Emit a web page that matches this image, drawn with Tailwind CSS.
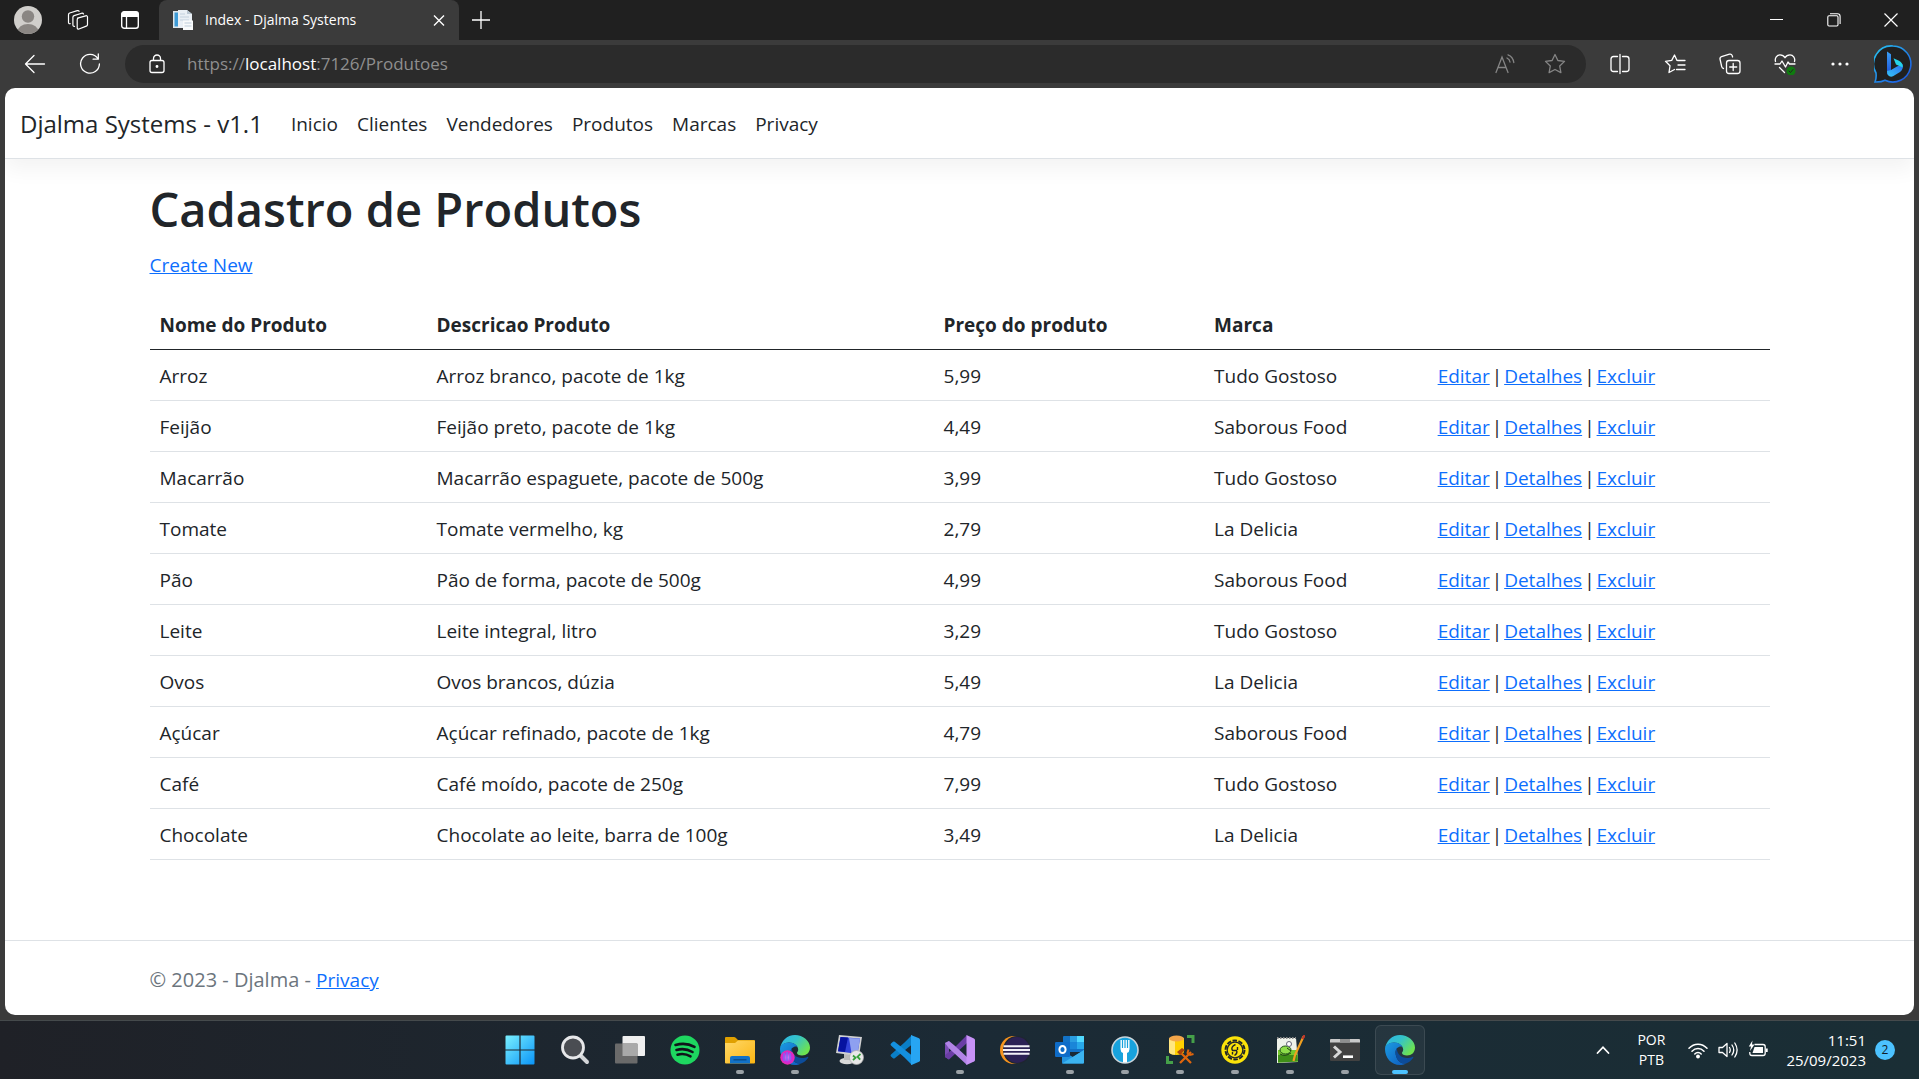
<!DOCTYPE html>
<html lang="pt-BR">
<head>
<meta charset="utf-8">
<meta name="viewport" content="width=device-width, initial-scale=1">
<title>Index - Djalma Systems</title>
<script src="https://cdn.jsdelivr.net/npm/@tailwindcss/browser@4"></script>
</head>
<body class="flex min-h-screen flex-col bg-[#3b3b3b] font-['Segoe_UI','Open_Sans',sans-serif] text-[#212529]">

<!-- Title bar -->
<div class="flex h-10 items-stretch bg-[#202020] text-white">
  <div class="flex w-[159px] items-center gap-[30px] rounded-br-md pl-[14px]">
    <button aria-label="Perfil" class="size-7"><svg viewBox="0 0 28 28" class="size-7"><defs><clipPath id="av"><circle cx="14" cy="14" r="14"/></clipPath></defs><g clip-path="url(#av)"><rect width="28" height="28" fill="#d0cecb"/><circle cx="14" cy="10.5" r="6.2" fill="#8a8683"/><ellipse cx="14" cy="26" rx="10.5" ry="8" fill="#8a8683"/></g></svg></button>
    <button aria-label="Workspaces" class="-ml-[5px] size-[22px]"><svg viewBox="0 0 22 22" class="size-[22px]" fill="none" stroke="#fff" stroke-width="1.2" stroke-linejoin="round" stroke-linecap="round"><path d="M10.5 9.2l8.2-2.4c1-.3 1.8.2 1.8 1.2v7.4c0 .8-.4 1.4-1.2 1.7L12 20c-1 .3-1.8-.2-1.8-1.2v-8c0-.8.2-1.4 1-1.700z"/><path d="M7.500 17.300c-1 .2-1.600-.3-1.600-1.200V8.300c0-.9.4-1.400 1.200-1.700l7.600-2.400c.9-.2 1.500 0 1.800.7"/><path d="M3.200 14.700c-1 .2-1.700-.3-1.700-1.200V5.700c0-.9.400-1.400 1.200-1.700l7.600-2.400c.9-.2 1.500 0 1.800.7"/></svg></button>
    <button aria-label="Guias verticais" class="-mr-1 ml-[1px] size-5"><svg viewBox="0 0 20 20" class="size-5"><rect x="1.700" y="1.700" width="16.600" height="16.600" rx="2.500" fill="none" stroke="#fff" stroke-width="1.400"/><path d="M1.500 7V4Q1.500 1.500 4 1.500h12q2.500 0 2.500 2.500v3z" fill="#fff"/><path d="M6.500 7v11" stroke="#fff" stroke-width="1.300"/></svg></button>
  </div>
  <div class="flex w-[300px] items-center rounded-t-lg bg-[#3b3b3b] pl-[13px] pr-[10px]">
    <svg viewBox="0 0 22 22" class="size-[22px]"><path d="M1 2h5v17H1z" fill="#dfe6ea"/><path d="M2.500 3.500h3.500v14H2.500z" fill="#3e9bd6"/><path d="M6 1h9l5 4v14H6z" fill="#e9eff5"/><path d="M15 1v4h5z" fill="#b9c6d2"/><path d="M8 5h5M8 8h9M8 11h9" stroke="#c3d1de"/><path d="M11 11.500h10v9.500H11z" fill="#f8fafb"/><path d="M12.500 14h7M12.500 17h7" stroke="#bccbd9"/></svg>
    <span class="ml-[11px] flex-1 text-sm">Index - Djalma Systems</span>
    <button aria-label="Fechar guia" class="size-5"><svg viewBox="0 0 20 20" class="size-5" stroke="#fff" stroke-width="1.400"><path d="M5 5.500l10 10M15 5.500l-10 10"/></svg></button>
  </div>
  <button aria-label="Nova guia" class="flex w-11 items-center justify-center"><svg viewBox="0 0 18 18" class="size-[18px]" stroke="#fff" stroke-width="1.300"><path d="M9 0v18M0 9h18"/></svg></button>
  <div class="ml-auto flex">
    <button aria-label="Minimizar" class="flex w-[58px] items-center justify-center"><svg viewBox="0 0 14 14" class="size-[14px]"><path d="M1 6.500h13" stroke="#fff"/></svg></button>
    <button aria-label="Restaurar" class="flex w-[57px] items-center justify-center"><svg viewBox="0 0 14 14" class="size-[14px]" fill="none" stroke="#fff" stroke-width="1.100"><rect x=".8" y="2.800" width="10.200" height="10.200" rx="1.200"/><path d="M3 .8h7.500q2.600 0 2.600 2.600V11"/></svg></button>
    <button aria-label="Fechar" class="flex w-[57px] items-center justify-center"><svg viewBox="0 0 14 14" class="size-[14px]" stroke="#fff" stroke-width="1.200"><path d="M.5.500l13 13M13.500.500l-13 13"/></svg></button>
  </div>
</div>

<!-- Address bar -->
<div class="flex h-12 items-center gap-[33px] pl-6 pr-[7px]">
  <button aria-label="Voltar" class="size-[22px]"><svg viewBox="0 0 22 22" class="size-[22px]" fill="none" stroke="#fff" stroke-width="1.300" stroke-linecap="round" stroke-linejoin="round"><path d="M20.500 11H1.500M10 2.500L1.500 11l8.500 8.500"/></svg></button>
  <button aria-label="Atualizar" class="size-[22px]"><svg viewBox="0 0 22 22" class="size-[22px]" fill="none" stroke="#fff" stroke-width="1.300" stroke-linecap="round" stroke-linejoin="round"><path d="M18.800 5.500A9.400 9.400 0 1 0 20.400 11M19.300 1v5.200h-5.200"/></svg></button>
  <div class="-ml-[9px] mr-[-10px] flex h-[38px] flex-1 items-center rounded-full bg-[#2b2b2b] pl-[22px] pr-5">
    <button aria-label="Informações do site" class="size-5"><svg viewBox="0 0 20 20" class="size-5" fill="none" stroke="#fff" stroke-width="1.300"><rect x="3" y="6.500" width="14" height="12" rx="2"/><path d="M6.500 6.500V4.500a3.500 3.500 0 0 1 7 0v2"/><circle cx="10" cy="12.500" r=".8" fill="#fff"/></svg></button>
    <div role="textbox" aria-label="Endereço" contenteditable="true" class="ml-5 flex-1 text-[17px] leading-6 text-[#8f8f8f]">https://<span class="text-white">localhost</span>:7126/Produtoes</div>
    <button aria-label="Ler em voz alta" class="mr-7 size-[22px]"><svg viewBox="0 0 22 22" class="size-[22px]" fill="none" stroke="#858585" stroke-width="1.300" stroke-linecap="round"><path d="M2 19.500L8 4l6 15.500M4 14.500h8M13 5c1.800.8 2.800 2.200 3 4M14 1.800c3.300 1.200 5.300 4 5.800 7.700"/></svg></button>
    <button aria-label="Favoritar" class="size-[22px]"><svg viewBox="0 0 22 22" class="size-[22px]" fill="none" stroke="#858585" stroke-width="1.300" stroke-linejoin="round"><path d="M11 1.500l2.900 6 6.600.9-4.800 4.600 1.200 6.600L11 16.500l-5.900 3.100 1.200-6.600L1.500 8.400l6.600-.9z"/></svg></button>
  </div>
  <button aria-label="Dividir tela" class="size-[22px]"><svg viewBox="0 0 22 22" class="size-[22px]" fill="none" stroke="#fff" stroke-width="1.300" stroke-linecap="round"><path d="M8.500 3.500h-4Q2 3.500 2 6v10q0 2.500 2.500 2.500h4M13.500 3.500h4Q20 3.500 20 6v10q0 2.500-2.500 2.500h-4M11 1.500v19"/></svg></button>
  <button aria-label="Favoritos" class="size-[22px]"><svg viewBox="0 0 22 22" class="size-[22px]" fill="none" stroke="#fff" stroke-width="1.300" stroke-linecap="round" stroke-linejoin="round"><path d="M14 7.500l-1-.1L10.500 2 7.700 7.400l-6.200.9L6 12.800l-1 6.700 5.500-3M14 7.500h7M14 12h7M12.500 16.500H21"/></svg></button>
  <button aria-label="Coleções" class="size-[22px]"><svg viewBox="0 0 22 22" class="size-[22px]" fill="none" stroke="#fff" stroke-width="1.300" stroke-linecap="round" stroke-linejoin="round"><rect x="7.500" y="7.500" width="13.500" height="13" rx="2.500"/><path d="M14.200 10.500v7M10.700 14h7M4.500 15.500c-1.200-.2-1.600-.8-1.800-1.800L1 6c-.2-1.200.3-2 1.500-2.400L10.500 1.200c1.300-.3 2.200.1 2.600 1.200l.5 1.600"/></svg></button>
  <button aria-label="Desempenho" class="size-[22px]"><svg viewBox="0 0 22 22" class="size-[22px]" fill="none" stroke="#fff" stroke-width="1.300" stroke-linecap="round" stroke-linejoin="round"><path d="M1.500 8.500C.5 5 3 1.800 6 1.800c2.300 0 4 1.200 5 3 1-1.800 2.700-3 5-3 3 0 5.500 3.200 4.500 6.700M1 11h5l2-3 3.500 6 2.500-5 1.500 2H21M5.500 14.500l5 5"/><circle cx="17" cy="18" r="4.500" fill="#0f7b0f" stroke="none"/><path d="M15 18l1.500 1.500 2.500-3" stroke="#222" stroke-width="1"/></svg></button>
  <button aria-label="Mais" class="size-[22px]"><svg viewBox="0 0 22 22" class="size-[22px]" fill="#fff"><circle cx="4" cy="11" r="1.600"/><circle cx="11" cy="11" r="1.600"/><circle cx="18" cy="11" r="1.600"/></svg></button>
  <button aria-label="Bing" class="-ml-[10px] size-[38px]"><svg viewBox="0 0 38 38" class="size-[38px]"><defs><linearGradient id="bg1" x1="0" y1="0" x2="1" y2="1"><stop offset="0" stop-color="#27c5f0"/><stop offset="1" stop-color="#1b4fe0"/></linearGradient><linearGradient id="bg2" x1="0" y1="0" x2="0" y2="1"><stop offset="0" stop-color="#3aa0f5"/><stop offset="1" stop-color="#1c4fd8"/></linearGradient><linearGradient id="bg3" x1="0" y1="1" x2="1" y2="0"><stop offset="0" stop-color="#36c5f5"/><stop offset="1" stop-color="#2a6cf0"/></linearGradient></defs><path d="M19 1a18 18 0 1 1-8 34.200c-3 1.700-6 1.900-10 1.800 1.200-3 1.500-5 1-9A18 18 0 0 1 19 1z" fill="#202020" stroke="url(#bg1)" stroke-width="1.600"/><path d="M13 6.500l4 2.800v16L13 30z" fill="url(#bg2)"/><path d="M13 26l4-1 6-3.500 5.500-2.500c1 3.500 0 6-2.500 8l-7 4.300c-3.500 1.200-6-.8-6-5.300z" fill="url(#bg3)"/><path d="M19.500 13.200l5.500 2.600c2.700 1.400 4 3.500 3.800 6.800L22 19.500z" fill="#25d3e8"/></svg></button>
</div>

<!-- Web page -->
<div class="mx-[5px] mb-[5px] flex flex-1 flex-col overflow-hidden rounded-[10px] bg-white text-[19px] leading-[30px]">
  <header class="border-b border-[#dee2e6] shadow-[0_10px_20px_rgba(0,0,0,0.05)]">
    <nav class="flex h-[70px] items-center pt-[2px] pl-[15px]">
      <a href="#" class="mr-7 text-2xl">Djalma Systems - v1.1</a>
      <ul class="flex gap-[19px]">
        <li><a href="#">Inicio</a></li>
        <li><a href="#">Clientes</a></li>
        <li><a href="#">Vendedores</a></li>
        <li><a href="#">Produtos</a></li>
        <li><a href="#">Marcas</a></li>
        <li><a href="#">Privacy</a></li>
      </ul>
    </nav>
  </header>

  <main class="mx-auto w-full max-w-[1650px] flex-1 px-[15px] pt-5">
    <h1 class="mb-[11px] text-[47px] leading-[60px] font-semibold">Cadastro de Produtos</h1>
    <p><a href="#" class="text-[#0d6efd] underline">Create New</a></p>
    <table class="mt-[19px] w-full table-fixed border-collapse text-left [&_a]:text-[#0d6efd] [&_a]:underline [&_div]:flex [&_div]:gap-[2px] [&_td]:px-[10px] [&_td]:pt-[11px] [&_td]:pb-[9px] [&_th]:px-[10px] [&_th]:pt-[11px] [&_th]:pb-[9px]">
      <colgroup><col class="w-[17.1%]"><col class="w-[31.3%]"><col class="w-[16.7%]"><col class="w-[13.8%]"><col class="w-[21.1%]"></colgroup>
      <thead class="border-b border-[#212529]">
        <tr><th>Nome do Produto</th><th>Descricao Produto</th><th>Preço do produto</th><th>Marca</th><th></th></tr>
      </thead>
      <tbody class="[&_tr]:border-b [&_tr]:border-[#dee2e6]">
        <tr><td>Arroz</td><td>Arroz branco, pacote de 1kg</td><td>5,99</td><td>Tudo Gostoso</td><td><div><a href="#">Editar</a> | <a href="#">Detalhes</a> | <a href="#">Excluir</a></div></td></tr>
        <tr><td>Feijão</td><td>Feijão preto, pacote de 1kg</td><td>4,49</td><td>Saborous Food</td><td><div><a href="#">Editar</a> | <a href="#">Detalhes</a> | <a href="#">Excluir</a></div></td></tr>
        <tr><td>Macarrão</td><td>Macarrão espaguete, pacote de 500g</td><td>3,99</td><td>Tudo Gostoso</td><td><div><a href="#">Editar</a> | <a href="#">Detalhes</a> | <a href="#">Excluir</a></div></td></tr>
        <tr><td>Tomate</td><td>Tomate vermelho, kg</td><td>2,79</td><td>La Delicia</td><td><div><a href="#">Editar</a> | <a href="#">Detalhes</a> | <a href="#">Excluir</a></div></td></tr>
        <tr><td>Pão</td><td>Pão de forma, pacote de 500g</td><td>4,99</td><td>Saborous Food</td><td><div><a href="#">Editar</a> | <a href="#">Detalhes</a> | <a href="#">Excluir</a></div></td></tr>
        <tr><td>Leite</td><td>Leite integral, litro</td><td>3,29</td><td>Tudo Gostoso</td><td><div><a href="#">Editar</a> | <a href="#">Detalhes</a> | <a href="#">Excluir</a></div></td></tr>
        <tr><td>Ovos</td><td>Ovos brancos, dúzia</td><td>5,49</td><td>La Delicia</td><td><div><a href="#">Editar</a> | <a href="#">Detalhes</a> | <a href="#">Excluir</a></div></td></tr>
        <tr><td>Açúcar</td><td>Açúcar refinado, pacote de 1kg</td><td>4,79</td><td>Saborous Food</td><td><div><a href="#">Editar</a> | <a href="#">Detalhes</a> | <a href="#">Excluir</a></div></td></tr>
        <tr><td>Café</td><td>Café moído, pacote de 250g</td><td>7,99</td><td>Tudo Gostoso</td><td><div><a href="#">Editar</a> | <a href="#">Detalhes</a> | <a href="#">Excluir</a></div></td></tr>
        <tr><td>Chocolate</td><td>Chocolate ao leite, barra de 100g</td><td>3,49</td><td>La Delicia</td><td><div><a href="#">Editar</a> | <a href="#">Detalhes</a> | <a href="#">Excluir</a></div></td></tr>
      </tbody>
    </table>
  </main>

  <footer class="border-t border-[#dee2e6] text-[#6c757d]">
    <div class="mx-auto flex h-[74px] w-full max-w-[1650px] items-center px-[15px] pt-1"><p class="text-xl leading-[30px]">© 2023 - Djalma - <a href="#" class="text-[19px] text-[#0d6efd] underline">Privacy</a></p></div>
  </footer>
</div>

<!-- Taskbar -->
<div class="grid h-[59px] grid-cols-[1fr_auto_1fr] items-center border-t border-[#454a4c] bg-linear-to-r from-[#1f2127] via-[#1b2a35] to-[#1a2e35] text-white">
  <div></div>
  <div class="flex [&>button]:relative [&>button]:flex [&>button]:h-[58px] [&>button]:w-[55px] [&>button]:items-center [&>button]:justify-center [&>button>i]:absolute [&>button>i]:bottom-[5px] [&>button>i]:h-1 [&>button>i]:w-2 [&>button>i]:rounded-full [&>button>i]:bg-[#9aa1a6] [&_svg]:size-[30px]">
    <button aria-label="Iniciar"><svg viewBox="0 0 30 30"><defs><linearGradient id="w" x1="0" y1="0" x2="1" y2="1"><stop offset="0" stop-color="#7af0ff"/><stop offset="1" stop-color="#0a94f7"/></linearGradient></defs><path d="M.5 1.500q0-1 1-1H14.400v13.900H.5zM15.600.500H28.500q1 0 1 1V14.400H15.600zM.5 15.600H14.400V29.500H1.500q-1 0-1-1zM15.600 15.600H29.500V28.500q0 1-1 1H15.600z" fill="url(#w)"/></svg></button>
    <button aria-label="Pesquisar"><svg viewBox="0 0 30 30"><path d="M20 20l7 7" stroke="#d3d5d8" stroke-width="4" stroke-linecap="round"/><circle cx="13" cy="12.500" r="10.500" fill="#4a4d52" stroke="#e7e8ea" stroke-width="2.800"/></svg></button>
    <button aria-label="Visão de tarefas"><svg viewBox="0 0 30 30"><rect x="7.500" y="1" width="22.500" height="20" rx="1" fill="#efefef"/><rect x="0" y="8.500" width="22.500" height="20" rx="1" fill="#6a6a6a"/><path d="M7.500 8.500h15V21h-15z" fill="#a9a9a9"/></svg></button>
    <button aria-label="Spotify"><svg viewBox="0 0 30 30"><circle cx="15" cy="15" r="14.500" fill="#1ed760"/><path d="M5.500 10c6-1.800 13.500-1.200 19 1.900M6.500 15c5.300-1.500 11.200-.8 16 2M7.500 19.700c4.400-1.200 9-.7 13 1.700" fill="none" stroke="#10131a" stroke-width="2.600" stroke-linecap="round"/></svg></button>
    <button aria-label="Explorador"><svg viewBox="0 0 30 30"><defs><linearGradient id="f" x1="0" y1="0" x2="1" y2="1"><stop offset="0" stop-color="#ffd868"/><stop offset="1" stop-color="#fbb512"/></linearGradient></defs><path d="M0 3q0-1 1-1h8q1 0 1.700.7L13 5h16q1 0 1 1v10H0z" fill="#e0a000"/><path d="M0 8h10l3-2.500h16q1 0 1 1V27.500q0 1-1 1H1q-1 0-1-1z" fill="url(#f)"/><path d="M5 28.500V23q0-2 2-2h16q2 0 2 2v5.500z" fill="#1272c8"/><path d="M8.500 24.800h13" stroke="#0b4a86" stroke-width="1.300"/></svg><i></i></button>
    <button aria-label="Edge perfil"><svg viewBox="0 0 30 30"><defs><linearGradient id="e1" x1="0" y1="0" x2="1" y2=".6"><stop offset="0" stop-color="#2bb5e8"/><stop offset=".5" stop-color="#35c3c8"/><stop offset="1" stop-color="#6ee34f"/></linearGradient><linearGradient id="e2" x1="0" y1="0" x2="1" y2="1"><stop offset="0" stop-color="#1b9be2"/><stop offset="1" stop-color="#0f5bbd"/></linearGradient><radialGradient id="pk"><stop offset="0" stop-color="#c88af0"/><stop offset=".6" stop-color="#c62be0"/><stop offset="1" stop-color="#f02aa8"/></radialGradient></defs><g id="edge"><path d="M0 14C1 6 7 0 15 0s15 6 15 12.500c0 5-3.500 8-8 8-3 0-5-1.200-5-2.500 0-.9 1.200-1.400 1.200-3.500C18.200 11 14 7.500 9 7.500S0 11 0 14z" fill="url(#e1)"/><path d="M0 14c0-4 4-6.500 9-6.500 4 0 7.500 2 8.700 4.500-3-1.500-7.200 1-7.200 5.500 0 6 4.500 12 10.500 11C19 29.600 17 30 15 30 6.500 30 0 23 0 14z" fill="url(#e2)"/><path d="M12 13c-1 1-1.500 2.800-1.500 4.500 0 6.500 5 12 10.500 11 3.200-1.200 5.500-3.200 7.200-5.800.4-.7-.2-1.200-.9-.8-1.500.8-3.300 1.100-5.300 1.100-5.500 0-10.500-4-10-10z" fill="#0c4c9a"/></g><circle cx="7.500" cy="22.500" r="7.200" fill="url(#pk)"/><path d="M4 18v8M7 17v9M10 18v7" stroke="#7a6cf5" stroke-width="1.300"/></svg><i></i></button>
    <button aria-label="Área de trabalho remota"><svg viewBox="0 0 30 30"><ellipse cx="12" cy="26" rx="7.500" ry="3.200" fill="#d9d9d9"/><path d="M9 19h7v6H9z" fill="#bbb"/><path d="M4 0l23 2-3 19L1 18z" fill="#cfd0d2"/><path d="M5.500 2l19.500 1.600L22.500 19 3 16.300z" fill="#3142d8"/><path d="M5.500 2l7.500.6L10 17l-7-.7z" fill="#0612a0"/><path d="M14 3l11 .6L22.500 19l-6-1z" fill="#8ea0f0"/><circle cx="21.500" cy="22.500" r="7" fill="#e8e8e8" stroke="#aaa" stroke-width=".7"/><path d="M18 20.500l2.500 2.200-2.500 2.500M25.500 19l-3 2.700 2.700 3" fill="none" stroke="#35a03a" stroke-width="1.800"/></svg></button>
    <button aria-label="Visual Studio Code"><svg viewBox="0 0 30 30"><path d="M22 0l-7.500 7.500L1 19.500q-1 1 0 2l2 1.800q.8.600 1.700 0L22 9.500z" fill="#0a7fc8"/><path d="M22 30l-7.500-7.500L1 10.500q-1-1 0-2l2-1.800q.8-.6 1.700 0L22 20.500z" fill="#1490df"/><path d="M21 0l8 3.300q1 .5 1 1.500v20.400q0 1-1 1.500L21.500 30q-.5 0-.5-1z" fill="#27a5f2"/></svg></button>
    <button aria-label="Visual Studio"><svg viewBox="0 0 30 30"><path d="M0 8l4-2v18.500L0 22z" fill="#7a4db5"/><path d="M0 22l4 2.500L22 8V0L8.500 13.500 0 20z" fill="#6a3da5"/><path d="M0 8l4-2 5.500 4.500L22 22v8L8.500 17.500 4 13.500z" fill="#b184e6"/><path d="M21.500 0L29 3.500q1 .5 1 1.500v20q0 1-1 1.500L21.500 30z" fill="#c792f7"/></svg><i></i></button>
    <button aria-label="Eclipse"><svg viewBox="0 0 30 30"><circle cx="14" cy="15" r="14" fill="#f7941e"/><circle cx="17" cy="15" r="14" fill="#1f2630"/><circle cx="17" cy="15" r="12.900" fill="#2c2255"/><path d="M3.500 11.300h26M3 15h27M3.500 18.700h26" stroke="#f3f2f8" stroke-width="2"/></svg></button>
    <button aria-label="Outlook"><svg viewBox="0 0 30 30"><path d="M8 2q0-1 1-1h19q1 0 1 1v15H8z" fill="#1272c6"/><path d="M15 1h7v6h-7z" fill="#2a9de0"/><path d="M22 1h7v6h-7z" fill="#50d9ff"/><path d="M15 7h7v7h-7z" fill="#1a86d8"/><path d="M22 7h7v7h-7z" fill="#28a8ea"/><path d="M7 16l11 6 11-7v12.500q0 1-1 1H8q-1 0-1-1z" fill="#2394e0"/><path d="M29 15L7 28.500h21q1 0 1-1z" fill="#3cb4f0"/><rect y="7" width="15" height="15" rx="1.200" fill="#0f6cc8"/><ellipse cx="7.500" cy="14.500" rx="3.100" ry="3.500" fill="none" stroke="#fff" stroke-width="2"/></svg><i></i></button>
    <button aria-label="Fork"><svg viewBox="0 0 30 30"><circle cx="15" cy="15" r="13" fill="#18a2dc" stroke="#c9d5db" stroke-width="1.600"/><path d="M10.500 5v9q0 3 2.500 4v9.500h4V18q2.500-1 2.500-4V5z" fill="#fff"/><path d="M12.500 5v8M15 5v8M17.500 5v8" stroke="#18a2dc" stroke-width="1.200"/></svg><i></i></button>
    <button aria-label="SQL Server Management Studio"><svg viewBox="0 0 30 30"><path d="M4 3h15v14q-1 3-7.500 3T4 17z" fill="#ffd000"/><path d="M4 3h6v16.800q-6-.5-6-3z" fill="#ffe680"/><ellipse cx="11.500" cy="3.500" rx="7.500" ry="3" fill="#f3a64a"/><path d="M22 1.500h6V8M2.500 21v6.500H8" fill="none" stroke="#45a049" stroke-width="3"/><path d="M14 16l12 12M26 17L15 28" stroke="#e0650c" stroke-width="2.300"/><path d="M12 17l5-4 3 2-5 5z" fill="#a8430c"/><path d="M23.500 14.500l-1 3.500 2.500 2 3.500-1" fill="none" stroke="#e0650c" stroke-width="2"/></svg><i></i></button>
    <button aria-label="Ferramenta"><svg viewBox="0 0 30 30"><circle cx="15" cy="15" r="13.700" fill="#fbe30a"/><circle cx="15" cy="15" r="9.500" fill="none" stroke="#20252a" stroke-width="2" stroke-dasharray="4.500 1.500"/><circle cx="15" cy="15" r="7.800" fill="#fbe30a" stroke="#20252a" stroke-width="1.200"/><path d="M15.500 9.500c-3.500 1.500-4.500 4-3 6h4c1 1.700 0 3.500-2 5M17.500 12v3M12.500 17v2.500" fill="none" stroke="#20252a" stroke-width="1.400"/></svg><i></i></button>
    <button aria-label="Notepad++"><svg viewBox="0 0 30 30"><path d="M2 3h19l2 24-21 1z" fill="#eef2ea"/><path d="M3 15h19l1 11.500L3 27.500z" fill="#76c92d"/><path d="M3 20h19.400l.6 6.500L3 27.500z" fill="#3f8f18"/><path d="M2 3h19" stroke="#8a8a8a" stroke-width="2" stroke-dasharray="1.500 1.500"/><ellipse cx="10.500" cy="15" rx="5.500" ry="4" fill="#8ede4a" stroke="#1f4f1a"/><path d="M5 19q5 3 11-1M12 13l4 3" stroke="#1c3a18" fill="none"/><circle cx="14" cy="9" r="2.500" fill="#fff" stroke="#667"/><path d="M28.500 1.500L20 20l-1.500 6" stroke="#f0a020" stroke-width="2.200" fill="none"/><path d="M29.500 0l-2 4" stroke="#c0392b" stroke-width="2.200"/></svg><i></i></button>
    <button aria-label="Terminal"><svg viewBox="0 0 30 30"><path d="M0 5q0-1 1-1h28q1 0 1 1v20q0 1-1 1H1q-1 0-1-1z" fill="#414141"/><path d="M0 5q0-1 1-1h28q1 0 1 1v2.500H0z" fill="#c9c9c9"/><path d="M10 4h10v3.500H10z" fill="#8f8f8f"/><path d="M4 11.500l6 5.500-6 5.500" fill="none" stroke="#d6d6d6" stroke-width="3"/><path d="M13 21.700h10" stroke="#fff" stroke-width="2.600"/></svg><i></i></button>
    <button aria-label="Microsoft Edge"><span class="flex size-[50px] items-center justify-center rounded-md border border-white/10 bg-white/5"><svg viewBox="0 0 30 30"><use href="#edge"/></svg></span><i class="w-4! bg-[#4cc2ff]!"></i></button>
  </div>
  <div class="flex items-center justify-end pr-6 text-sm leading-5">
    <button aria-label="Ícones ocultos" class="mr-[27px]"><svg viewBox="0 0 14 10" class="h-[10px] w-[14px]" fill="none" stroke="#fff" stroke-width="1.800" stroke-linecap="round"><path d="M1.500 8L7 2.200 12.500 8"/></svg></button>
    <button class="mr-[23px] w-[28px] text-center">POR<br>PTB</button>
    <button aria-label="Rede, som e bateria" class="mr-[18px] flex items-center gap-[10px]">
      <svg viewBox="0 0 20 20" class="size-5" fill="none" stroke="#fff" stroke-width="1.500" stroke-linecap="round"><path d="M1 8.200c5-5.400 13-5.400 18 0M4 11.200c3.400-3.600 8.600-3.600 12 0M6.800 14c1.800-1.900 4.600-1.900 6.400 0"/><circle cx="10" cy="16.500" r="1.200" fill="#fff"/></svg>
      <svg viewBox="0 0 20 20" class="size-5" fill="none" stroke="#fff" stroke-width="1.300" stroke-linecap="round" stroke-linejoin="round"><path d="M1 7.500h3.500L9 3.500v13l-4.500-4H1zM11.500 7.500q1.500 2.500 0 5M14 5q3.500 5 0 10M16.800 3q4.600 7 0 14"/></svg>
      <svg viewBox="0 0 20 20" class="size-5" fill="none" stroke="#fff" stroke-width="1.300"><path d="M6.500 4.500H15q2.200 0 2.200 2.200v6.600q0 2.200-2.200 2.200H4q-2.200 0-2.200-2.200V12"/><path d="M6.500 7H15v6H4.500z" fill="#fff" stroke="none"/><path d="M18.800 8.500v3.500" stroke-width="1.800"/><path d="M4.500.500L.8 6.500H3L2 11l4.500-6.500H4z" fill="#fff" stroke="none"/></svg>
    </button>
    <button class="mr-[9px] text-right text-[15px] leading-5">11:51<br>25/09/2023</button>
    <span class="flex size-5 items-center justify-center rounded-full bg-[#4cc2ff] text-xs text-[#10202a]">2</span>
  </div>
</div>
</body>
</html>
